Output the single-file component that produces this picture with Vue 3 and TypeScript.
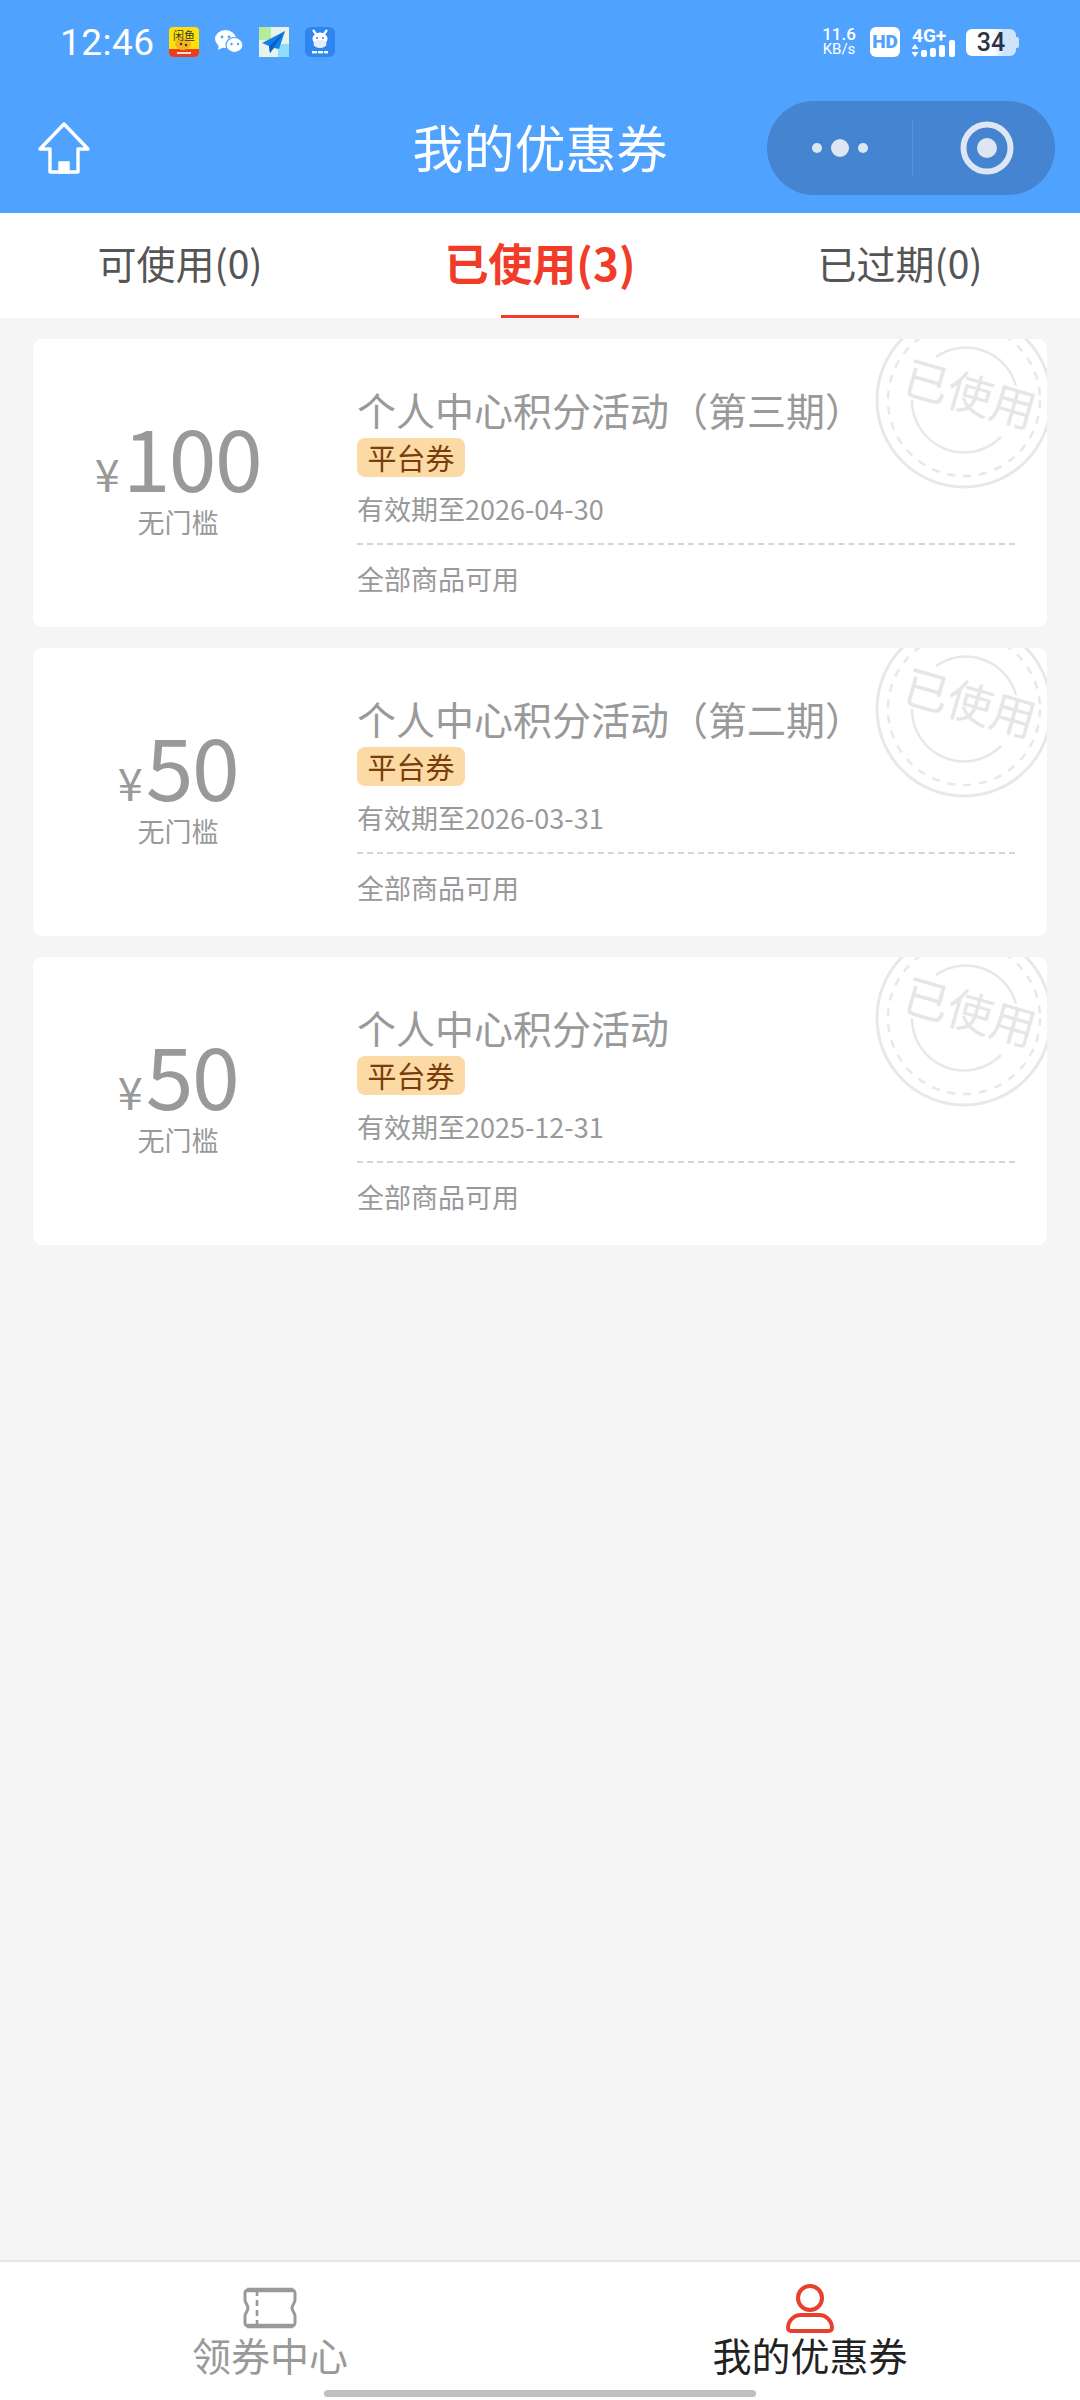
<template>
  <div class="page">
    <div class="top">
      <div class="status">
        <span class="time">12:46</span>
        <div class="apps">
          <svg width="30" height="30" viewBox="0 0 30 30">
            <rect width="30" height="30" rx="4" fill="#ffe10a" />
            <path d="M0 22h30v4a4 4 0 0 1-4 4H4a4 4 0 0 1-4-4z" fill="#e8401c" />
            <ellipse cx="14" cy="17" rx="8" ry="6" fill="#f5b21a" />
            <circle cx="12" cy="17" r="1.2" fill="#333" />
            <circle cx="17" cy="18" r="1.2" fill="#333" />
            <text x="15" y="13" class="xy">闲鱼</text>
            <rect x="8" y="25" width="14" height="2" fill="#fff" opacity="0.85" />
          </svg>
          <svg class="wx" width="28" height="24" viewBox="0 0 28 24">
            <ellipse cx="10.5" cy="9" rx="10.5" ry="9" fill="#fff" />
            <path d="M4 15 3 20l6-3z" fill="#fff" />
            <ellipse cx="19.5" cy="15" rx="8.5" ry="7.5" fill="#fff" stroke="#50a2ff" stroke-width="1.2" />
            <circle cx="7" cy="7" r="1.4" fill="#50a2ff" />
            <circle cx="14" cy="7" r="1.4" fill="#50a2ff" />
            <circle cx="16.5" cy="14" r="1.2" fill="#50a2ff" />
            <circle cx="23" cy="14" r="1.2" fill="#50a2ff" />
          </svg>
          <svg width="30" height="30" viewBox="0 0 30 30">
            <rect width="30" height="30" fill="#e8f3ea" />
            <rect width="12" height="13" fill="#b5ec9c" />
            <rect x="19" y="17" width="11" height="13" fill="#8fdcff" />
            <path d="M26 4 3 16l7 3 1 7 4-5 5 1z" fill="#1580ea" />
            <path d="M26 4 10 19l1 7 2-3z" fill="#0c62c4" />
          </svg>
          <svg width="30" height="30" viewBox="0 0 30 30">
            <rect width="30" height="30" rx="6" fill="#2f86ee" />
            <ellipse cx="15" cy="12" rx="7.5" ry="6.5" fill="#fff" />
            <ellipse cx="15" cy="17" rx="6.5" ry="4" fill="#e6eefb" />
            <path d="M8 3l3 4M22 3l-3 4" stroke="#fff" stroke-width="2.2" />
            <circle cx="12" cy="11" r="1" fill="#2f86ee" />
            <circle cx="18" cy="11" r="1" fill="#2f86ee" />
            <rect x="7" y="24" width="5" height="2.4" fill="#fff" />
            <rect x="13" y="24" width="5" height="2.4" fill="#fff" />
            <rect x="19" y="24" width="4" height="2.4" fill="#fff" />
          </svg>
        </div>
        <div class="sys">
          <div class="speed"><span>11.6</span><span class="unit">KB/s</span></div>
          <div class="hd">HD</div>
          <svg class="signal" width="44" height="38" viewBox="0 -8 44 38">
            <text x="0" y="15" class="net">4G+</text>
            <path d="M3 17l3.5 5H-.5zM3 30l3.5-5H-.5z" fill="#fff" />
            <rect x="9" y="23" width="6" height="7" rx="2" fill="#fff" />
            <rect x="18" y="21" width="6" height="9" rx="2" fill="#fff" />
            <rect x="27" y="18" width="6" height="12" rx="2" fill="#fff" />
            <rect x="37" y="13" width="6" height="17" rx="2" fill="#fff" />
          </svg>
          <div class="battery"><span class="level">34</span><i class="cap"></i></div>
        </div>
      </div>
      <div class="nav">
        <svg class="home" width="52" height="52" viewBox="0 0 52 52" fill="none" stroke="#fff" stroke-width="3.4">
          <path d="M26 2 2 27h10v23h28V27h10z" stroke-linejoin="round" />
          <path d="M22 50V41h8v9z" fill="#fff" />
        </svg>
        <div class="title">我的优惠券</div>
        <div class="capsule">
          <div class="cap-side more">
            <svg width="66" height="20" viewBox="0 0 66 20" fill="#dde6f2">
              <circle cx="10" cy="10" r="5" />
              <circle cx="33" cy="10" r="9" />
              <circle cx="56" cy="10" r="5" />
            </svg>
          </div>
          <i class="cap-line"></i>
          <div class="cap-side scan">
            <svg width="54" height="54" viewBox="0 0 54 54">
              <circle cx="27" cy="27" r="23.5" fill="none" stroke="#dde6f2" stroke-width="6" />
              <circle cx="27" cy="27" r="10" fill="#dde6f2" />
            </svg>
          </div>
        </div>
      </div>
    </div>

    <div class="tabs">
      <div v-for="t in tabs" :key="t.name" class="tab" :class="{ active: t.active }">
        {{ t.name }}({{ t.count }})
      </div>
    </div>

    <div class="list">
      <div v-for="c in coupons" :key="c.title" class="card">
        <div class="left">
          <div class="amount"><span class="yen">¥</span>{{ c.amount }}</div>
          <div class="cond">无门槛</div>
        </div>
        <div class="right">
          <div class="name">{{ c.title }}</div>
          <div class="tag">平台券</div>
          <div class="date">有效期至{{ c.date }}</div>
          <div class="scope">全部商品可用</div>
        </div>
        <div class="stamp">
          <svg width="180" height="180" viewBox="0 0 180 180" fill="none" stroke="#e8e8e8">
            <circle cx="90" cy="90" r="87" stroke-width="3" />
            <circle cx="90" cy="90" r="76" stroke-width="2.5" stroke-dasharray="8 8" />
            <path d="M62 47A52 52 0 0 1 142 76M38 90A52 52 0 0 0 127 127" stroke-width="2.5" />
          </svg>
          <span class="stamp-text">已使用</span>
        </div>
      </div>
    </div>

    <div class="bottom">
      <div class="bt-item">
        <div class="bt-icon">
          <svg width="56" height="42" viewBox="0 0 56 42" fill="none" stroke="#999">
            <path d="M6 3h44a3 3 0 0 1 3 3v7c0 3-3 5-3 8s3 5 3 8v7a3 3 0 0 1-3 3H6a3 3 0 0 1-3-3v-7c0-3 3-5 3-8s-3-5-3-8V6a3 3 0 0 1 3-3z" stroke-width="3" />
            <path d="M15 3v36" stroke-width="2.6" stroke-dasharray="6 4" />
            <path d="M5 3h46M5 39h46" stroke-width="4.4" />
          </svg>
        </div>
        <span class="bt-label">领券中心</span>
      </div>
      <div class="bt-item on">
        <div class="bt-icon">
          <svg width="48" height="50" viewBox="0 0 48 50" fill="none" stroke="#e8402f" stroke-width="4">
            <circle cx="24" cy="15" r="12" />
            <path d="M15 32h18a13 13 0 0 1 13 13 3 3 0 0 1-3 3H5a3 3 0 0 1-3-3 13 13 0 0 1 13-13z" />
          </svg>
        </div>
        <span class="bt-label">我的优惠券</span>
      </div>
      <i class="indicator"></i>
    </div>
  </div>
</template>

<script setup lang="ts">
type tabItem = {
  name: string;
  count: number;
  active?: boolean;
};

type couponItem = {
  amount: number;
  title: string;
  date: string;
};

const tabs: Array<tabItem> = [
  { name: "可使用", count: 0 },
  { name: "已使用", count: 3, active: true },
  { name: "已过期", count: 0 },
];

const coupons: Array<couponItem> = [
  { amount: 100, title: "个人中心积分活动（第三期）", date: "2026-04-30" },
  { amount: 50, title: "个人中心积分活动（第二期）", date: "2026-03-31" },
  { amount: 50, title: "个人中心积分活动", date: "2025-12-31" },
];
</script>

<style>
html,
body {
  margin: 0;
  background: #f5f5f5;
}
</style>

<style scoped>
.page {
  width: 1080px;
  height: 2400px;
  display: flex;
  flex-direction: column;
  background: #f5f5f5;
  font-family: "Noto Sans CJK SC", "Noto Sans", sans-serif;
  overflow: hidden;
}
.top {
  height: 213px;
  background: #50a2ff;
  color: #fff;
}
.status {
  height: 84px;
  padding: 0 60px;
  display: flex;
  align-items: center;
  box-sizing: border-box;
}
.time {
  font-family: Roboto, sans-serif;
  font-size: 37px;
  width: 109px;
  letter-spacing: 0.5px;
}
.apps {
  display: flex;
  align-items: center;
  gap: 16px;
}
.xy {
  font-size: 11px;
  text-anchor: middle;
  fill: #333;
}
.sys {
  margin-left: auto;
  display: flex;
  align-items: center;
}
.speed {
  width: 36px;
  margin-right: 13px;
  display: flex;
  flex-direction: column;
  align-items: center;
  font-family: Roboto, sans-serif;
  font-size: 17px;
  line-height: 15px;
  font-weight: 500;
}
.unit {
  font-size: 15px;
  font-weight: 400;
}
.hd {
  width: 30px;
  height: 30px;
  margin-right: 12px;
  border-radius: 6px;
  background: #fff;
  color: #50a2ff;
  font-family: Roboto, sans-serif;
  font-size: 19px;
  font-weight: 900;
  line-height: 30px;
  text-align: center;
}
.signal {
  margin-top: -8px;
}
.net {
  font-family: Roboto, sans-serif;
  font-size: 19px;
  font-weight: 700;
  fill: #fff;
}
.battery {
  position: relative;
  width: 50px;
  height: 27px;
  margin-left: 10px;
  margin-right: 4px;
  border-radius: 6px;
  background: linear-gradient(to right, #fff 55%, #cfe3fa 75%);
  color: #2b3445;
  font-family: Roboto, sans-serif;
  font-size: 25px;
  font-weight: 500;
  line-height: 28px;
  text-align: center;
}
.cap {
  position: absolute;
  right: -3px;
  top: 8px;
  width: 3px;
  height: 11px;
  border-radius: 0 2px 2px 0;
  background: #cfe3fa;
}
.nav {
  height: 129px;
  padding: 0 25px 0 38px;
  display: flex;
  align-items: center;
  position: relative;
}
.home {
  margin-top: -1px;
}
.title {
  position: absolute;
  left: 0;
  right: 0;
  top: 32px;
  text-align: center;
  font-size: 51px;
  line-height: 60px;
}
.capsule {
  margin-left: auto;
  margin-top: -1px;
  width: 288px;
  height: 94px;
  border-radius: 47px;
  background: #4484d0;
  display: flex;
  align-items: center;
  position: relative;
}
.cap-side {
  display: flex;
  justify-content: center;
  align-items: center;
}
.more {
  width: 145px;
}
.scan {
  flex: 1;
  padding-left: 5px;
}
.cap-line {
  width: 1px;
  height: 56px;
  background: #5a93d8;
}
.tabs {
  height: 105px;
  display: grid;
  grid-template-columns: 360px 360px 360px;
  background: #fff;
}
.tab {
  position: relative;
  text-align: center;
  font-size: 39px;
  line-height: 98px;
  color: #555;
}
.tab.active {
  font-size: 44px;
  font-weight: 700;
  color: #f03c28;
}
.tab.active::after {
  content: "";
  position: absolute;
  left: 141px;
  bottom: 0;
  width: 78px;
  height: 3px;
  background: #f03c28;
}
.list {
  flex: 1;
  padding: 21px 33px 0;
  display: flex;
  flex-direction: column;
  gap: 21px;
}
.card {
  position: relative;
  height: 288px;
  border-radius: 9px;
  background: #fff;
  display: flex;
  overflow: hidden;
}
.left {
  width: 290px;
  padding-top: 83px;
  box-sizing: border-box;
  text-align: center;
  color: #999;
}
.amount {
  font-size: 86px;
  line-height: 66px;
  letter-spacing: -1.5px;
}
.yen {
  font-size: 45px;
  margin-right: 3px;
  letter-spacing: 0;
}
.cond {
  font-size: 27px;
  line-height: 32px;
}
.right {
  margin-left: 34px;
  width: 658px;
  padding-top: 45px;
  box-sizing: border-box;
  color: #999;
}
.name {
  font-size: 39px;
  line-height: 50px;
}
.tag {
  width: 108px;
  height: 39px;
  margin-top: 4px;
  border-radius: 8px;
  background: #fbdaa6;
  color: #7a3d0a;
  font-size: 29px;
  line-height: 38px;
  text-align: center;
}
.date {
  font-size: 27px;
  line-height: 36px;
  margin-top: 14px;
  padding-bottom: 16px;
  border-bottom: 2px dashed #d4d4d4;
}
.scope {
  font-size: 27px;
  line-height: 36px;
  margin-top: 16px;
}
.stamp {
  position: absolute;
  left: 841px;
  top: -29px;
  width: 180px;
  height: 180px;
}
.stamp-text {
  position: absolute;
  left: 29px;
  top: 57px;
  width: 135px;
  text-align: center;
  font-size: 45px;
  line-height: 50px;
  color: #e6e6e6;
  transform: rotate(16deg);
}
.bottom {
  position: relative;
  height: 140px;
  border-top: 2px solid #e5e5e5;
  background: #fff;
  display: grid;
  grid-template-columns: 540px 540px;
  box-sizing: border-box;
}
.bt-item {
  display: flex;
  flex-direction: column;
  align-items: center;
  padding-top: 21px;
}
.bt-icon {
  height: 50px;
  display: flex;
  align-items: center;
}
.bt-label {
  font-size: 39px;
  line-height: 50px;
  margin-top: -4px;
  color: #999;
}
.bt-item.on .bt-label {
  color: #222;
}
.indicator {
  position: absolute;
  left: 324px;
  bottom: 3px;
  width: 432px;
  height: 7px;
  border-radius: 4px;
  background: #bfbfbf;
}
</style>
